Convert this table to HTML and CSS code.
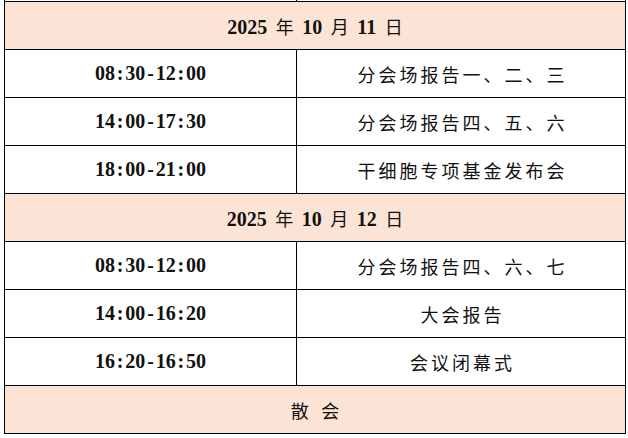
FILE: index.html
```html
<!DOCTYPE html>
<html lang="zh">
<head>
<meta charset="utf-8">
<title>会议日程</title>
<link rel="stylesheet" href="styles.css">
</head>
<body>
<div class="sheet">
  <div class="row stub"><div class="cell left"></div><div class="cell"></div></div>

  <div class="row head"><span class="label"><span class="num">2025</span> 年 <span class="num">10</span> 月 <span class="num">11</span> 日</span></div>
  <div class="row"><div class="cell left time">08<span class="sep">:</span>30<span class="sep">-</span>12<span class="sep">:</span>00</div><div class="cell text">分会场报告一、二、三</div></div>
  <div class="row"><div class="cell left time">14<span class="sep">:</span>00<span class="sep">-</span>17<span class="sep">:</span>30</div><div class="cell text">分会场报告四、五、六</div></div>
  <div class="row"><div class="cell left time">18<span class="sep">:</span>00<span class="sep">-</span>21<span class="sep">:</span>00</div><div class="cell text">干细胞专项基金发布会</div></div>

  <div class="row head"><span class="label"><span class="num">2025</span> 年 <span class="num">10</span> 月 <span class="num">12</span> 日</span></div>
  <div class="row"><div class="cell left time">08<span class="sep">:</span>30<span class="sep">-</span>12<span class="sep">:</span>00</div><div class="cell text">分会场报告四、六、七</div></div>
  <div class="row"><div class="cell left time">14<span class="sep">:</span>00<span class="sep">-</span>16<span class="sep">:</span>20</div><div class="cell text">大会报告</div></div>
  <div class="row"><div class="cell left time">16<span class="sep">:</span>20<span class="sep">-</span>16<span class="sep">:</span>50</div><div class="cell text">会议闭幕式</div></div>

  <div class="row head end"><span class="label">散 会</span></div>
</div>
</body>
</html>
```

FILE: styles.css
```css
html, body {
  margin: 0;
  padding: 0;
  background: #ffffff;
}

body {
  font-family: "Liberation Serif", "Noto Sans CJK SC", serif;
  color: #111111;
}

.sheet {
  margin-left: 4px;
  width: 622px;
  box-sizing: border-box;
  border-left: 1px solid #000000;
  border-right: 1px solid #000000;
}

.row {
  display: grid;
  grid-template-columns: 292px 1fr;
  height: 48px;
  box-sizing: border-box;
  border-bottom: 1px solid #000000;
}

.row.stub {
  height: 2px;
}

.cell {
  display: flex;
  align-items: center;
  justify-content: center;
  white-space: nowrap;
}

.cell.left {
  border-right: 1px solid #000000;
}

.time {
  font-weight: bold;
  font-size: 20px;
}

.sep {
  display: inline-block;
  width: 0.52em;
  text-align: center;
}

.text {
  font-family: "Noto Sans CJK SC", sans-serif;
  font-size: 18px;
  letter-spacing: 3px;
  text-indent: 3px;
}

.head {
  display: flex;
  align-items: center;
  justify-content: center;
  background: #fbe4d6;
  font-size: 18px;
  white-space: pre;
}

.label {
  word-spacing: 4px;
}

.num {
  font-weight: bold;
  font-size: 20px;
}

.head.end .label {
  letter-spacing: 4px;
  word-spacing: 0;
  padding-left: 4px;
}
```
